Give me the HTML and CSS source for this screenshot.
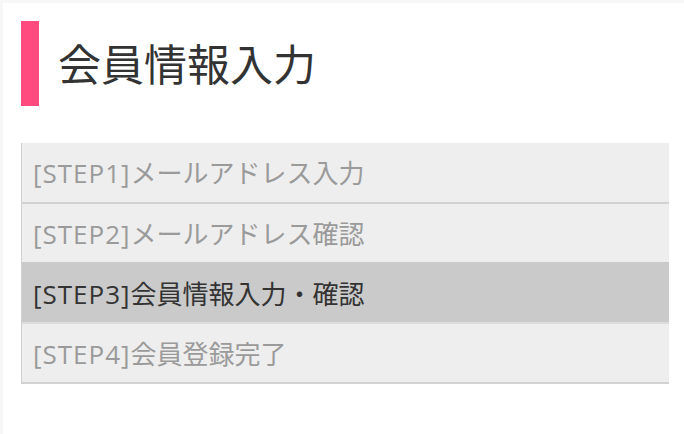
FILE: index.html
```html
<!DOCTYPE html>
<html lang="ja">
<head>
<meta charset="utf-8">
<title>会員情報入力</title>
<link rel="stylesheet" href="styles.css">
</head>
<body>
<div class="page">
  <div class="card">
    <h1 class="title">会員情報入力</h1>
    <ol class="steps">
      <li class="step"><span class="tag">[STEP1]</span>メールアドレス入力</li>
      <li class="step"><span class="tag">[STEP2]</span>メールアドレス確認</li>
      <li class="step current"><span class="tag">[STEP3]</span>会員情報入力・確認</li>
      <li class="step"><span class="tag">[STEP4]</span>会員登録完了</li>
    </ol>
  </div>
</div>
</body>
</html>
```
FILE: styles.css
```css
html, body {
  margin: 0;
  padding: 0;
  background: #f7f7f7;
}
body {
  font-family: "Noto Sans CJK JP", "Noto Sans", sans-serif;
  width: 684px;
  height: 434px;
  overflow: hidden;
}
.page {
  padding: 3px 0 0 3px;
  height: 100%;
  box-sizing: border-box;
}
.card {
  background: #ffffff;
  height: 100%;
  padding: 18px 15px 0 18px;
  box-sizing: border-box;
}
.title {
  margin: 0;
  height: 85px;
  border-left: 18px solid #ff4a80;
  padding-left: 19px;
  font-size: 43px;
  font-weight: 400;
  line-height: 83px;
  color: #333333;
}
.steps {
  list-style: none;
  margin: 37px 0 0 0;
  padding: 0;
  border-left: 1px solid #cfcfcf;
  border-bottom: 2px solid #d2d2d2;
}
.step {
  background: #eeeeee;
  height: 58px;
  line-height: 57px;
  padding-left: 11px;
  font-size: 26px;
  color: #9a9a9a;
  border-top: 2px solid #d2d2d2;
}
.tag {
  font-family: "Open Sans", "Noto Sans", sans-serif;
  letter-spacing: 1px;
}
.step:first-child {
  border-top: 0;
  height: 59px;
}
.step.current {
  background: #cacaca;
  color: #333333;
  border-top-color: #cacaca;
}
.step.current + .step {
  border-top-color: #dcdcdc;
}
```
